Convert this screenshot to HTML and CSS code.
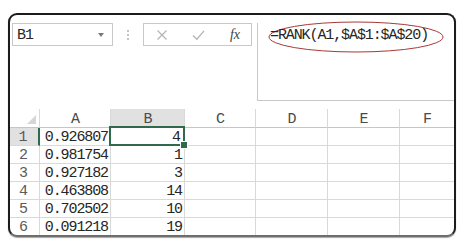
FILE: index.html
```html
<!DOCTYPE html>
<html>
<head>
<meta charset="utf-8">
<link rel="stylesheet" href="styles.css">
</head>
<body>
<div class="frame">
  <div class="topbar">
    <div class="namebox"><span class="name">B1</span><span class="caret"></span></div>
    <div class="sep"><i></i><i></i><i></i></div>
    <div class="btnbox">
      <svg class="ico" width="12" height="12" viewBox="0 0 12 12"><path d="M1.5 1.5 L10.5 10.5 M10.5 1.5 L1.5 10.5" stroke="#b4b4b4" stroke-width="1.2" fill="none"/></svg>
      <svg class="ico" width="13" height="12" viewBox="0 0 13 12"><path d="M1 6.5 L4.8 10.2 L12 1.8" stroke="#b4b4b4" stroke-width="1.3" fill="none"/></svg>
      <span class="fx">fx</span>
    </div>
    <div class="formula">
      <span class="ftext">=RANK(A1,$A$1:$A$20)</span>
      <svg class="oval" width="180" height="34" viewBox="0 0 180 34"><ellipse cx="90" cy="16" rx="87" ry="15" fill="none" stroke="#a83838" stroke-width="1"/></svg>
    </div>
  </div>
  <div class="grid">
    <div class="c corner"><span class="tri"></span></div>
    <div class="c h">A</div>
    <div class="c h sel-h">B</div>
    <div class="c h">C</div>
    <div class="c h">D</div>
    <div class="c h">E</div>
    <div class="c h last">F</div>

    <div class="c r sel-r">1</div><div class="c n">0.926807</div><div class="c n active">4</div><div class="c"></div><div class="c"></div><div class="c"></div><div class="c last"></div>
    <div class="c r">2</div><div class="c n">0.981754</div><div class="c n">1</div><div class="c"></div><div class="c"></div><div class="c"></div><div class="c last"></div>
    <div class="c r">3</div><div class="c n">0.927182</div><div class="c n">3</div><div class="c"></div><div class="c"></div><div class="c"></div><div class="c last"></div>
    <div class="c r">4</div><div class="c n">0.463808</div><div class="c n">14</div><div class="c"></div><div class="c"></div><div class="c"></div><div class="c last"></div>
    <div class="c r">5</div><div class="c n">0.702502</div><div class="c n">10</div><div class="c"></div><div class="c"></div><div class="c"></div><div class="c last"></div>
    <div class="c r">6</div><div class="c n">0.091218</div><div class="c n">19</div><div class="c"></div><div class="c"></div><div class="c"></div><div class="c last"></div>
  </div>
</div>
</body>
</html>
```

FILE: styles.css
```css
* { box-sizing: border-box; }
html, body { margin: 0; padding: 0; background: #fff; }
body { width: 469px; height: 247px; overflow: hidden; }

.frame {
  margin: 13px 0 0 8px;
  width: 448px;
  height: 224px;
  border: 2px solid #1c1c1c;
  border-bottom-color: #6e6e6e;
  border-radius: 9px;
  overflow: hidden;
  background: #fff;
  box-shadow: 0 1px 1px rgba(0,0,0,0.35);
  font-family: "Liberation Mono", "DejaVu Sans Mono", monospace;
  font-size: 15px;
  letter-spacing: -1.1px;
  color: #262626;
}

.topbar {
  display: flex;
  align-items: flex-start;
  margin-top: 8px;
  height: 78px;
}

.namebox {
  margin-left: 2px;
  width: 101px;
  height: 23px;
  border: 1px solid #c8c8c8;
  display: flex;
  align-items: center;
  justify-content: space-between;
  padding: 0 8px 0 4px;
}
.name { line-height: 21px; padding-top: 1px; }
.caret {
  width: 0; height: 0;
  border-left: 3.5px solid transparent;
  border-right: 3.5px solid transparent;
  border-top: 4px solid #7a7a7a;
}

.sep {
  width: 30px;
  height: 23px;
  display: flex;
  flex-direction: column;
  align-items: center;
  justify-content: center;
  gap: 2px;
}
.sep i { display: block; width: 2px; height: 2px; background: #c4c4c4; }

.btnbox {
  width: 109px;
  height: 23px;
  border: 1px solid #c8c8c8;
  display: flex;
  align-items: center;
  padding: 0 8px 0 12px;
  justify-content: space-between;
}
.ico { display: block; }
.fx {
  font-family: "Liberation Serif", "DejaVu Serif", serif;
  font-style: italic;
  font-size: 14px;
  letter-spacing: 0;
  color: #444;
  margin-right: 3px;
}

.formula {
  position: relative;
  flex: 1;
  margin-left: 5px;
  height: 78px;
  border-left: 1px solid #c8c8c8;
  border-bottom: 1px solid #c8c8c8;
  padding: 3px 0 0 12px;
  line-height: 20px;
}
.ftext { position: relative; z-index: 1; }
.oval { position: absolute; left: 8px; top: -2px; }

.grid {
  margin-top: 8px;
  display: grid;
  grid-template-columns: 30px 71px 74px 71px 72px 72px 1fr;
  grid-template-rows: 19px repeat(6, 18px);
}

.c {
  border-right: 1px solid #d9d9d9;
  border-bottom: 1px solid #d9d9d9;
  line-height: 19px;
  white-space: nowrap;
}
.c.last { border-right: none; }
.h { text-align: center; color: #4a4a4a; line-height: 22px; border-bottom-color: #c6c6c6; }
.corner {
  display: flex;
  align-items: flex-end;
  justify-content: flex-end;
  padding: 0 3px 3px 0;
  border-bottom-color: #c6c6c6;
}
.tri {
  width: 0; height: 0;
  border-left: 9px solid transparent;
  border-bottom: 9px solid #d6d6d6;
}
.r { text-align: center; color: #5a5a5a; padding-right: 3px; }
.n { text-align: right; padding-right: 2px; }
.sel-h { background: #e1e1e1; }
.sel-r { background: #e1e1e1; border-right: 2px solid #2f6a4c; }
.active { position: relative; padding-right: 4px; }
.active::after {
  content: "";
  position: absolute;
  left: -2px; top: -2px; right: -1px; bottom: -1px;
  border: 2px solid #2f6a4c;
}
.active::before {
  content: "";
  position: absolute;
  right: -4px; bottom: -4px;
  width: 6px; height: 6px;
  background: #2f6a4c;
  border: 1px solid #fff;
  z-index: 2;
}
```
